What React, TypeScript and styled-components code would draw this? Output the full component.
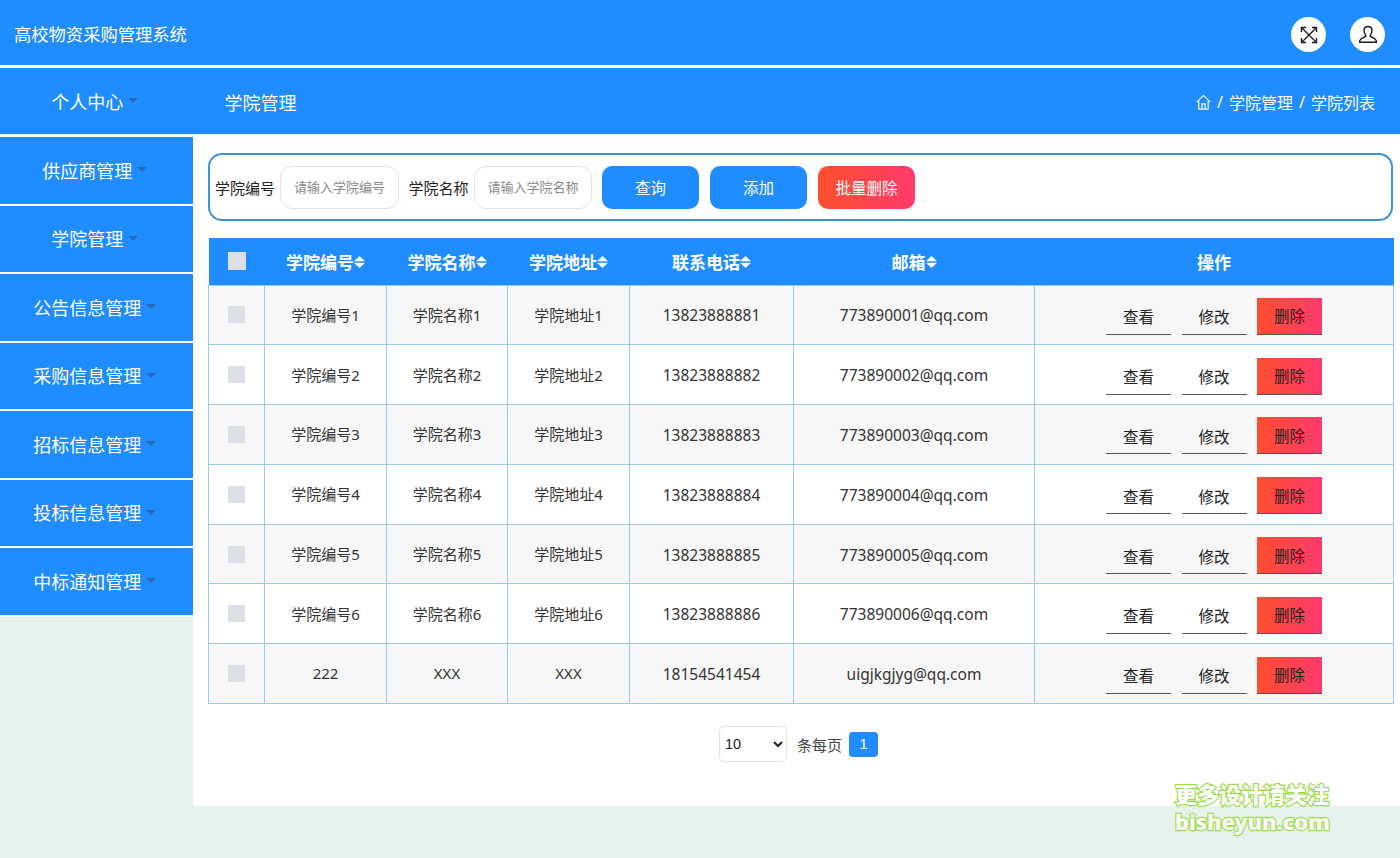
import styled, { createGlobalStyle } from "styled-components";

const BLUE = "#1f8cff";
const LINE = "#9ccbe6";
const SANS = `"Noto Sans", "Noto Sans CJK SC", sans-serif`;
const RED = "linear-gradient(90deg, #ff4f2e, #ff3a6c)";

const Global = createGlobalStyle`
  * { box-sizing: border-box; }
  html, body { margin: 0; padding: 0; }
  body { background: #e6f2ec; font-family: ${SANS}; }
`;

const Page = styled.div`
  position: relative;
  width: 1400px;
  height: 858px;
  overflow: hidden;
`;

const TopBar = styled.header`
  height: 68px;
  padding: 4px 15px 0 14px;
  display: flex;
  align-items: center;
  justify-content: space-between;
  background: ${BLUE};
  border-bottom: 3px solid #fff;
  color: #fff;
`;

const Brand = styled.div`
  margin-top: -3px;
  font-size: 17.3px;
  white-space: nowrap;
`;

const RoundIcons = styled.div`
  display: flex;
  gap: 24px;
`;

const RoundIcon = styled.button`
  width: 35px;
  height: 35px;
  padding: 0;
  border: 0;
  border-radius: 50%;
  background: #fff;
  display: flex;
  align-items: center;
  justify-content: center;
`;

const Body = styled.div`
  display: flex;
  align-items: flex-start;
`;

const Sidebar = styled.nav`
  width: 193px;
  flex: none;
  display: flex;
  flex-direction: column;
`;

const MenuItem = styled.a<{ $first?: boolean }>`
  height: ${(p) => (p.$first ? "69px" : "68.5px")};
  padding: 0 3.5px 1px 0;
  display: flex;
  align-items: center;
  justify-content: center;
  background: ${BLUE};
  border-bottom: ${(p) => (p.$first ? "3px" : "2.5px")} solid #fff;
  color: #fff;
  font-size: 18px;
`;

const Caret = styled.i`
  width: 0;
  height: 0;
  margin: 0 0 0 5px;
  border-left: 5px solid transparent;
  border-right: 5px solid transparent;
  border-top: 5px solid #2769b8;
`;

const Main = styled.main`
  width: 1207px;
  flex: none;
`;

const TitleBar = styled.div`
  height: 66px;
  padding: 2px 25px 0 31.5px;
  display: flex;
  align-items: center;
  justify-content: space-between;
  background: ${BLUE};
  color: #fff;
`;

const PageTitle = styled.h1`
  margin: 0;
  font-size: 18px;
  font-weight: 400;
`;

const Crumbs = styled.div`
  display: flex;
  align-items: center;
  font-size: 16px;
`;

const CrumbSep = styled.span`
  margin: 0 6px;
`;

const Content = styled.section`
  height: 672px;
  padding: 19px 7px 0 15px;
  background: #fff;
`;

const SearchBar = styled.form`
  height: 68px;
  margin: 0 0 17px;
  padding: 0 5px;
  display: flex;
  align-items: center;
  border: 2px solid #3f92d6;
  border-radius: 14px;
`;

const FieldLabel = styled.label`
  margin-right: 5px;
  font-size: 15px;
  color: #222;
  white-space: nowrap;
`;

const TextInput = styled.input`
  width: 118.5px;
  height: 43px;
  margin-right: 10px;
  padding: 0 13px;
  border: 1px solid #e3e3e3;
  border-radius: 12px;
  background: #fff;
  font: 13px ${SANS};
  outline: none;

  &::placeholder {
    color: #8a8a8a;
    opacity: 1;
  }
`;

const ActionButton = styled.button<{ $danger?: boolean }>`
  width: 97px;
  height: 43px;
  margin-right: 11px;
  padding: 0;
  border: 0;
  border-radius: 10px;
  background: ${(p) => (p.$danger ? RED : BLUE)};
  color: #fff;
  font: 15.5px ${SANS};
`;

const Grid = styled.table`
  width: 1185px;
  table-layout: fixed;
  border-collapse: collapse;
  font-size: 15px;
  color: #333;
`;

const HeadRow = styled.tr`
  height: 47px;
  background: ${BLUE};
  color: #fff;
`;

const HeadCell = styled.th`
  padding: 1px 0 0;
  font-size: 17px;
  font-weight: 700;
  text-align: center;
`;

const HeadInner = styled.span`
  display: inline-flex;
  align-items: center;
`;

const Row = styled.tr`
  height: 59.8px;
  background: #fff;

  &:nth-child(odd) {
    background: #f7f7f7;
  }
`;

const Cell = styled.td<{ $latin?: boolean }>`
  padding: ${(p) => (p.$latin ? "1px 0 0" : "0 0 1px")};
  border: 1px solid ${LINE};
  text-align: center;
  font-size: ${(p) => (p.$latin ? "15.5px" : "15px")};
`;

const Check = styled.input<{ $head?: boolean }>`
  appearance: none;
  display: block;
  width: ${(p) => (p.$head ? "18px" : "17px")};
  height: ${(p) => (p.$head ? "18px" : "17px")};
  margin: ${(p) => (p.$head ? "-2px" : "1px")} 0 0 19px;
  background: #dcdfe6;
`;

const Actions = styled.div`
  padding-top: 4px;
  display: flex;
  justify-content: center;
  align-items: flex-end;
  gap: 10.5px;
`;

const RowButton = styled.button<{ $danger?: boolean }>`
  width: 65px;
  height: ${(p) => (p.$danger ? "37px" : "35px")};
  padding: 0;
  border: 0;
  border-bottom: 1px solid #555;
  background: ${(p) => (p.$danger ? RED : "transparent")};
  color: #222;
  font: 15.5px ${SANS};
`;

const Pager = styled.div`
  margin-top: 22px;
  padding-right: 4px;
  display: flex;
  align-items: center;
  justify-content: center;
  font-size: 15px;
  color: #444;
`;

const PageSize = styled.select`
  width: 68px;
  height: 36px;
  margin-right: 10px;
  padding-left: 1px;
  border: 1px solid #e3e3e3;
  border-radius: 5px;
  background: #fff;
  color: #222;
  font: 14.5px "Liberation Sans", sans-serif;
`;

const PageNumber = styled.button`
  width: 29px;
  height: 25px;
  margin-left: 7px;
  padding: 0;
  border: 0;
  border-radius: 4px;
  background: ${BLUE};
  color: #fff;
  font: 14.5px "Liberation Sans", sans-serif;
`;

const Watermark = styled.div`
  position: absolute;
  left: 1175px;
  top: 781px;
  color: #fff;
  font-weight: 800;
  white-space: nowrap;
  -webkit-text-stroke: 2.5px #a0dc50;
  paint-order: stroke fill;
`;

const WatermarkLine = styled.div`
  height: 27px;
  line-height: 27px;
  font-size: 22px;
`;

const ExpandIcon = () => (
  <svg width="18" height="18" viewBox="0 0 18 18" fill="none" stroke="#1a1a1a" strokeWidth="1.4">
    <path d="M2 2l14 14M16 2L2 16" />
    <path d="M1.500 6V1.500H6M12 1.500h4.500V6M1.500 12v4.500H6M12 16.500h4.500V12" />
  </svg>
);

const UserIcon = () => (
  <svg width="20" height="20" viewBox="0 0 20 20" fill="none" stroke="#1a1a1a" strokeWidth="1.400">
    <path d="M10 1.500c-2.500 0-4 1.900-4 4.300 0 1.900.8 3.200 1.700 4.200v1.300c-1.600 1.100-4.800 1.700-6 4.400v1.600h16.600v-1.600c-1.200-2.700-4.400-3.300-6-4.400V10c.9-1 1.700-2.300 1.700-4.200 0-2.400-1.500-4.300-4-4.300z" />
  </svg>
);

const HomeIcon = () => (
  <svg width="15" height="17" viewBox="0 0 16 17" fill="none" stroke="#fff" strokeWidth="1.200">
    <path d="M0.800 8L8 1 15.200 8" />
    <path d="M3 6.500V15.500H13V6.500" />
    <path d="M6.300 15.500V10h3.400v5.500" />
  </svg>
);

const SortIcon = () => (
  <svg width="11" height="12" viewBox="0 0 11 12" fill="#fff">
    <path d="M5.500 0L11 5.300H0z" />
    <path d="M5.500 12L0 6.700h11z" />
  </svg>
);

const menus = ["个人中心", "供应商管理", "学院管理", "公告信息管理", "采购信息管理", "招标信息管理", "投标信息管理", "中标通知管理"];

const columns = [
  { width: 56 },
  { width: 122, title: "学院编号" },
  { width: 121, title: "学院名称" },
  { width: 122, title: "学院地址" },
  { width: 164, title: "联系电话" },
  { width: 241, title: "邮箱" },
  { width: 359, title: "操作", plain: true },
];

const rows = [
  ["学院编号1", "学院名称1", "学院地址1", "13823888881", "773890001@qq.com"],
  ["学院编号2", "学院名称2", "学院地址2", "13823888882", "773890002@qq.com"],
  ["学院编号3", "学院名称3", "学院地址3", "13823888883", "773890003@qq.com"],
  ["学院编号4", "学院名称4", "学院地址4", "13823888884", "773890004@qq.com"],
  ["学院编号5", "学院名称5", "学院地址5", "13823888885", "773890005@qq.com"],
  ["学院编号6", "学院名称6", "学院地址6", "13823888886", "773890006@qq.com"],
  ["222", "XXX", "XXX", "18154541454", "uigjkgjyg@qq.com"],
];

const App = () => {
  return (
    <Page>
      <Global />
      <TopBar>
        <Brand>高校物资采购管理系统</Brand>
        <RoundIcons>
          <RoundIcon type="button" aria-label="全屏">
            <ExpandIcon />
          </RoundIcon>
          <RoundIcon type="button" aria-label="用户">
            <UserIcon />
          </RoundIcon>
        </RoundIcons>
      </TopBar>
      <Body>
        <Sidebar>
          {menus.map((name, i) => (
            <MenuItem key={name} $first={i === 0}>
              {name}
              <Caret />
            </MenuItem>
          ))}
        </Sidebar>
        <Main>
          <TitleBar>
            <PageTitle>学院管理</PageTitle>
            <Crumbs>
              <HomeIcon />
              <CrumbSep>/</CrumbSep>
              <span>学院管理</span>
              <CrumbSep>/</CrumbSep>
              <span>学院列表</span>
            </Crumbs>
          </TitleBar>
          <Content>
            <SearchBar>
              <FieldLabel>学院编号</FieldLabel>
              <TextInput placeholder="请输入学院编号" />
              <FieldLabel>学院名称</FieldLabel>
              <TextInput placeholder="请输入学院名称" />
              <ActionButton type="button">查询</ActionButton>
              <ActionButton type="button">添加</ActionButton>
              <ActionButton type="button" $danger>
                批量删除
              </ActionButton>
            </SearchBar>
            <Grid>
              <colgroup>
                {columns.map((c, i) => (
                  <col key={i} style={{ width: c.width }} />
                ))}
              </colgroup>
              <thead>
                <HeadRow>
                  {columns.map((c, i) => (
                    <HeadCell key={i}>
                      {c.title ? (
                        <HeadInner>
                          {c.title}
                          {!c.plain && <SortIcon />}
                        </HeadInner>
                      ) : (
                        <Check type="checkbox" $head />
                      )}
                    </HeadCell>
                  ))}
                </HeadRow>
              </thead>
              <tbody>
                {rows.map((row) => (
                  <Row key={row[3]}>
                    <Cell>
                      <Check type="checkbox" />
                    </Cell>
                    {row.map((value, i) => (
                      <Cell key={value} $latin={i > 2}>
                        {value}
                      </Cell>
                    ))}
                    <Cell>
                      <Actions>
                        <RowButton type="button">查看</RowButton>
                        <RowButton type="button">修改</RowButton>
                        <RowButton type="button" $danger>
                          删除
                        </RowButton>
                      </Actions>
                    </Cell>
                  </Row>
                ))}
              </tbody>
            </Grid>
            <Pager>
              <PageSize defaultValue="10">
                <option value="10">10</option>
                <option value="20">20</option>
              </PageSize>
              条每页
              <PageNumber type="button">1</PageNumber>
            </Pager>
          </Content>
        </Main>
      </Body>
      <Watermark>
        <WatermarkLine>更多设计请关注</WatermarkLine>
        <WatermarkLine>bisheyun.com</WatermarkLine>
      </Watermark>
    </Page>
  );
};

export default App;
